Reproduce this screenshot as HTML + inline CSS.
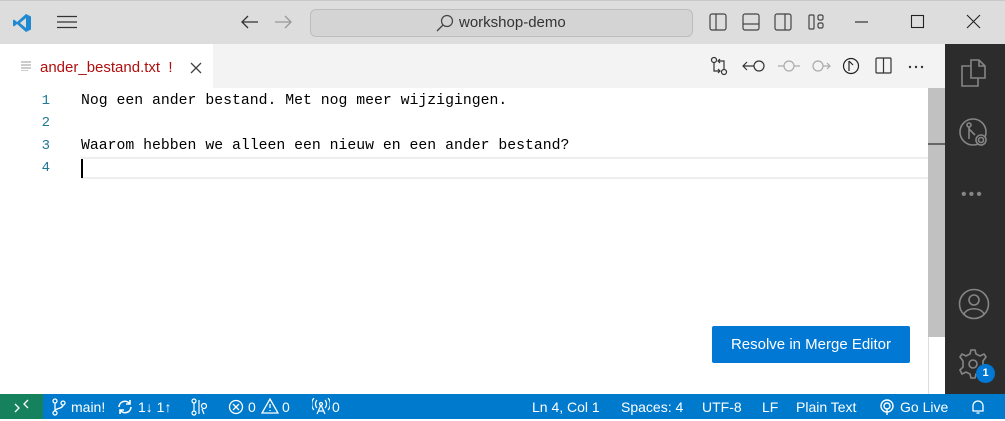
<!DOCTYPE html>
<html><head><meta charset="utf-8"><style>
*{margin:0;padding:0;box-sizing:border-box}
body{width:1005px;height:419px;overflow:hidden;background:#fff;font-family:"Liberation Sans",sans-serif;position:relative}
.a{position:absolute}
svg{position:absolute}
.mono{font-family:"Liberation Mono",monospace;font-size:14.8px;color:#000}
.ln{position:absolute;left:30px;width:20px;text-align:right;font-family:"Liberation Mono",monospace;font-size:14px;color:#237893}
.sb{position:absolute;top:394px;height:25px;color:#fff;font-size:14px;line-height:27px;white-space:nowrap}
</style></head><body>
<div class="a" style="left:0;top:0;width:1005px;height:44px;background:#dddddd;border-top:1px solid #c8c8c8"></div>
<svg style="left:12px;top:13px" width="20" height="20" viewBox="0 0 20 20"><path d="M14 1 L19 3.5 V16.5 L14 19 L5 11 L2 13.5 L1 12.5 V7.5 L2 6.5 L5 9 Z" fill="#1f8ad2"/><path d="M14 5 V15 L8 10 Z" fill="#dddddd"/></svg>
<svg style="left:57px;top:15px" width="21" height="14"><path d="M0 1.5H20M0 7H20M0 12.5H20" stroke="#333" stroke-width="1.3"/></svg>
<svg style="left:241px;top:15px" width="18" height="14"><path d="M1 7H17M7 1L1 7L7 13" stroke="#333" stroke-width="1.3" fill="none"/></svg>
<svg style="left:274px;top:15px" width="18" height="14"><path d="M1 7H17M11 1L17 7L11 13" stroke="#999" stroke-width="1.3" fill="none"/></svg>
<div class="a" style="left:310px;top:9px;width:383px;height:28px;background:#d4d4d4;border:1px solid #bdbdbd;border-radius:6px"></div>
<svg style="left:436px;top:14px" width="18" height="18"><circle cx="11" cy="7" r="5.5" stroke="#444" stroke-width="1.2" fill="none"/><path d="M7 11L1 17" stroke="#444" stroke-width="1.3"/></svg>
<div class="a" style="left:459px;top:12px;font-size:15px;color:#333;line-height:22px">workshop-demo</div>
<svg style="left:709px;top:13px" width="130" height="18" fill="none" stroke="#444" stroke-width="1.2">
<rect x="1" y="1" width="16" height="16" rx="2"/><path d="M7 1V17"/>
<rect x="34" y="1" width="16" height="16" rx="2"/><path d="M34 11H50"/>
<rect x="66" y="1" width="16" height="16" rx="2"/><path d="M76 1V17"/>
<rect x="100" y="2" width="5" height="14" rx="1"/><rect x="109" y="2" width="5" height="5" rx="1.5"/><rect x="109" y="10" width="5" height="5" rx="1.5"/></svg>
<svg style="left:855px;top:13px" width="140" height="18" fill="none" stroke="#222" stroke-width="1.1"><path d="M0 9H13"/><rect x="56.5" y="2.5" width="12" height="12"/><path d="M112 2L125 15M125 2L112 15"/></svg>
<div class="a" style="left:0;top:44px;width:945px;height:44px;background:#f3f3f3"></div>
<div class="a" style="left:0;top:44px;width:213px;height:44px;background:#fff"></div>
<svg style="left:21px;top:61px" width="11" height="10"><path d="M0 1H10M0 4H10M0 7H10M0 10H7" stroke="#999" stroke-width="1"/></svg>
<div class="a" style="left:40px;top:58px;font-size:15px;color:#b00f0f;line-height:20px">ander_bestand.txt&nbsp; !</div>
<svg style="left:190px;top:62px" width="12" height="12"><path d="M1 1L11 11M11 1L1 11" stroke="#444" stroke-width="1.3"/></svg>
<svg style="left:710px;top:56px" width="225" height="22" fill="none" stroke-width="1.2">
<g stroke="#333"><circle cx="4" cy="4" r="2.5"/><circle cx="14" cy="16" r="2.5"/><path d="M4 7V15H10M8 13L10 15L8 17M14 13V5H8M10 3L8 5L10 7"/></g>
<g stroke="#333"><circle cx="49" cy="10" r="5"/><path d="M44 10H33M37 6L33 10L37 14"/></g>
<g stroke="#aaa"><circle cx="79" cy="10" r="5"/><path d="M68 10H74M84 10H90"/></g>
<g stroke="#aaa"><circle cx="108" cy="10" r="5"/><path d="M113 10H120M117 7L120 10L117 13"/></g>
<g stroke="#222"><circle cx="141" cy="10" r="7.5"/><path d="M139 5V15M139 5L143 9"/></g>
<g stroke="#333"><rect x="166" y="2" width="15" height="15" rx="1"/><path d="M173.5 2V17"/></g>
<g fill="#333" stroke="none"><circle cx="200" cy="11" r="1.2"/><circle cx="206" cy="11" r="1.2"/><circle cx="212" cy="11" r="1.2"/></g></svg>
<div class="a" style="left:81px;top:157px;width:847px;height:22px;border-top:2px solid #eee;border-bottom:2px solid #eee"></div>
<div class="ln" style="top:93px">1</div><div class="ln" style="top:115px">2</div><div class="ln" style="top:138px">3</div><div class="ln" style="top:160px">4</div>
<div class="a mono" style="left:81px;top:93px">Nog een ander bestand. Met nog meer wijzigingen.</div>
<div class="a mono" style="left:81px;top:138px">Waarom hebben we alleen een nieuw en een ander bestand?</div>
<div class="a" style="left:81px;top:159px;width:2px;height:19px;background:#000"></div>
<div class="a" style="left:928px;top:88px;width:17px;height:249px;background:#c1c1c1"></div>
<div class="a" style="left:928px;top:143px;width:17px;height:2px;background:#666"></div>
<div class="a" style="left:928px;top:337px;width:1px;height:57px;background:#ddd"></div>
<div class="a" style="left:712px;top:326px;width:198px;height:37px;background:#0078d4;border-radius:2px;color:#fff;font-size:15px;line-height:37px;text-align:center">Resolve in Merge Editor</div>
<div class="a" style="left:945px;top:44px;width:60px;height:350px;background:#2c2c2c"></div>
<svg style="left:958px;top:57px" width="32" height="32" fill="none" stroke="#858585" stroke-width="1.6"><path d="M13 3H21L27 9V21H13Z M21 3V9H27"/><path d="M13 9H4V29H20V21"/></svg>
<svg style="left:958px;top:117px" width="34" height="34" fill="none" stroke="#858585" stroke-width="1.6"><circle cx="15" cy="15" r="13"/><circle cx="11" cy="8" r="2"/><path d="M11 10V22M11 12L17 18"/><circle cx="23" cy="23" r="5" fill="#2c2c2c"/><circle cx="23" cy="23" r="2.5"/></svg>
<div class="a" style="left:961px;top:186px;color:#858585;font-size:16px;letter-spacing:2px">•••</div>
<svg style="left:958px;top:288px" width="32" height="32" fill="none" stroke="#858585" stroke-width="1.6"><circle cx="16" cy="16" r="14.5"/><circle cx="16" cy="12" r="5"/><path d="M6 26C9 19 23 19 26 26"/></svg>
<svg style="left:958px;top:347px" width="32" height="34" fill="none" stroke="#858585" stroke-width="1.6"><circle cx="15" cy="17" r="4"/><path d="M13 3H17L18 7L22 9L26 7L28 10L25 14V20L28 23L26 27L22 25L18 27L17 31H13L12 27L8 25L4 27L2 23L5 20V14L2 10L4 7L8 9L12 7Z"/></svg>
<div class="a" style="left:976px;top:364px;width:19px;height:19px;border-radius:50%;background:#0078d4;color:#fff;font-size:11px;font-weight:bold;line-height:19px;text-align:center">1</div>
<div class="a" style="left:0;top:394px;width:1005px;height:25px;background:#007acc"></div>
<div class="a" style="left:0;top:394px;width:43px;height:25px;background:#16825d"></div>
<svg style="left:14px;top:399px" width="16" height="14" fill="none" stroke="#fff" stroke-width="1.3"><path d="M1 5L5 9L1 13M14 1L10 5L14 9"/></svg>
<svg style="left:51px;top:398px" width="16" height="18" fill="none" stroke="#fff" stroke-width="1.3"><circle cx="4" cy="3" r="2"/><circle cx="4" cy="15" r="2"/><circle cx="12" cy="5" r="2"/><path d="M4 5V13M12 7C12 11 4 10 4 13"/></svg>
<div class="sb" style="left:71px">main!</div>
<svg style="left:117px;top:399px" width="16" height="16" fill="none" stroke="#fff" stroke-width="1.6"><path d="M2 8A6 6 0 0 1 13 5M14 8A6 6 0 0 1 3 11M13 1V5H9M3 15V11H7"/></svg>
<div class="sb" style="left:138px">1↓ 1↑</div>
<svg style="left:191px;top:398px" width="16" height="18" fill="none" stroke="#fff" stroke-width="1.2"><circle cx="3" cy="3" r="2"/><circle cx="3" cy="15" r="2"/><circle cx="13" cy="8" r="2.5"/><path d="M3 5V13M8 2V16M11 11L13 16"/></svg>
<svg style="left:228px;top:399px" width="16" height="16" fill="none" stroke="#fff" stroke-width="1.3"><circle cx="8" cy="8" r="6.5"/><path d="M5 5L11 11M11 5L5 11"/></svg>
<div class="sb" style="left:248px">0</div>
<svg style="left:261px;top:398px" width="18" height="16" fill="none" stroke="#fff" stroke-width="1.3"><path d="M9 1L17 15H1Z M9 6V10M9 12V13"/></svg>
<div class="sb" style="left:282px">0</div>
<svg style="left:312px;top:398px" width="18" height="17" fill="none" stroke="#fff" stroke-width="1.2"><circle cx="9" cy="6" r="1.5"/><path d="M9 7L5 16M9 7L13 16M6 13H12M5 2A6 6 0 0 0 5 10M13 2A6 6 0 0 1 13 10M2 0A9 9 0 0 0 2 12M16 0A9 9 0 0 1 16 12"/></svg>
<div class="sb" style="left:332px">0</div>
<div class="sb" style="left:532px">Ln 4, Col 1</div>
<div class="sb" style="left:621px">Spaces: 4</div>
<div class="sb" style="left:702px">UTF-8</div>
<div class="sb" style="left:762px">LF</div>
<div class="sb" style="left:796px">Plain Text</div>
<svg style="left:879px;top:399px" width="16" height="17" fill="none" stroke="#fff" stroke-width="1.4"><circle cx="8" cy="7" r="6"/><circle cx="8" cy="7" r="3"/><path d="M8 10V16"/></svg>
<div class="sb" style="left:900px">Go Live</div>
<svg style="left:970px;top:399px" width="16" height="16" fill="none" stroke="#fff" stroke-width="1.3"><path d="M3 12V7A5 5 0 0 1 13 7V12H2.5H13.5M6.5 14H9.5"/></svg>
</body></html>
